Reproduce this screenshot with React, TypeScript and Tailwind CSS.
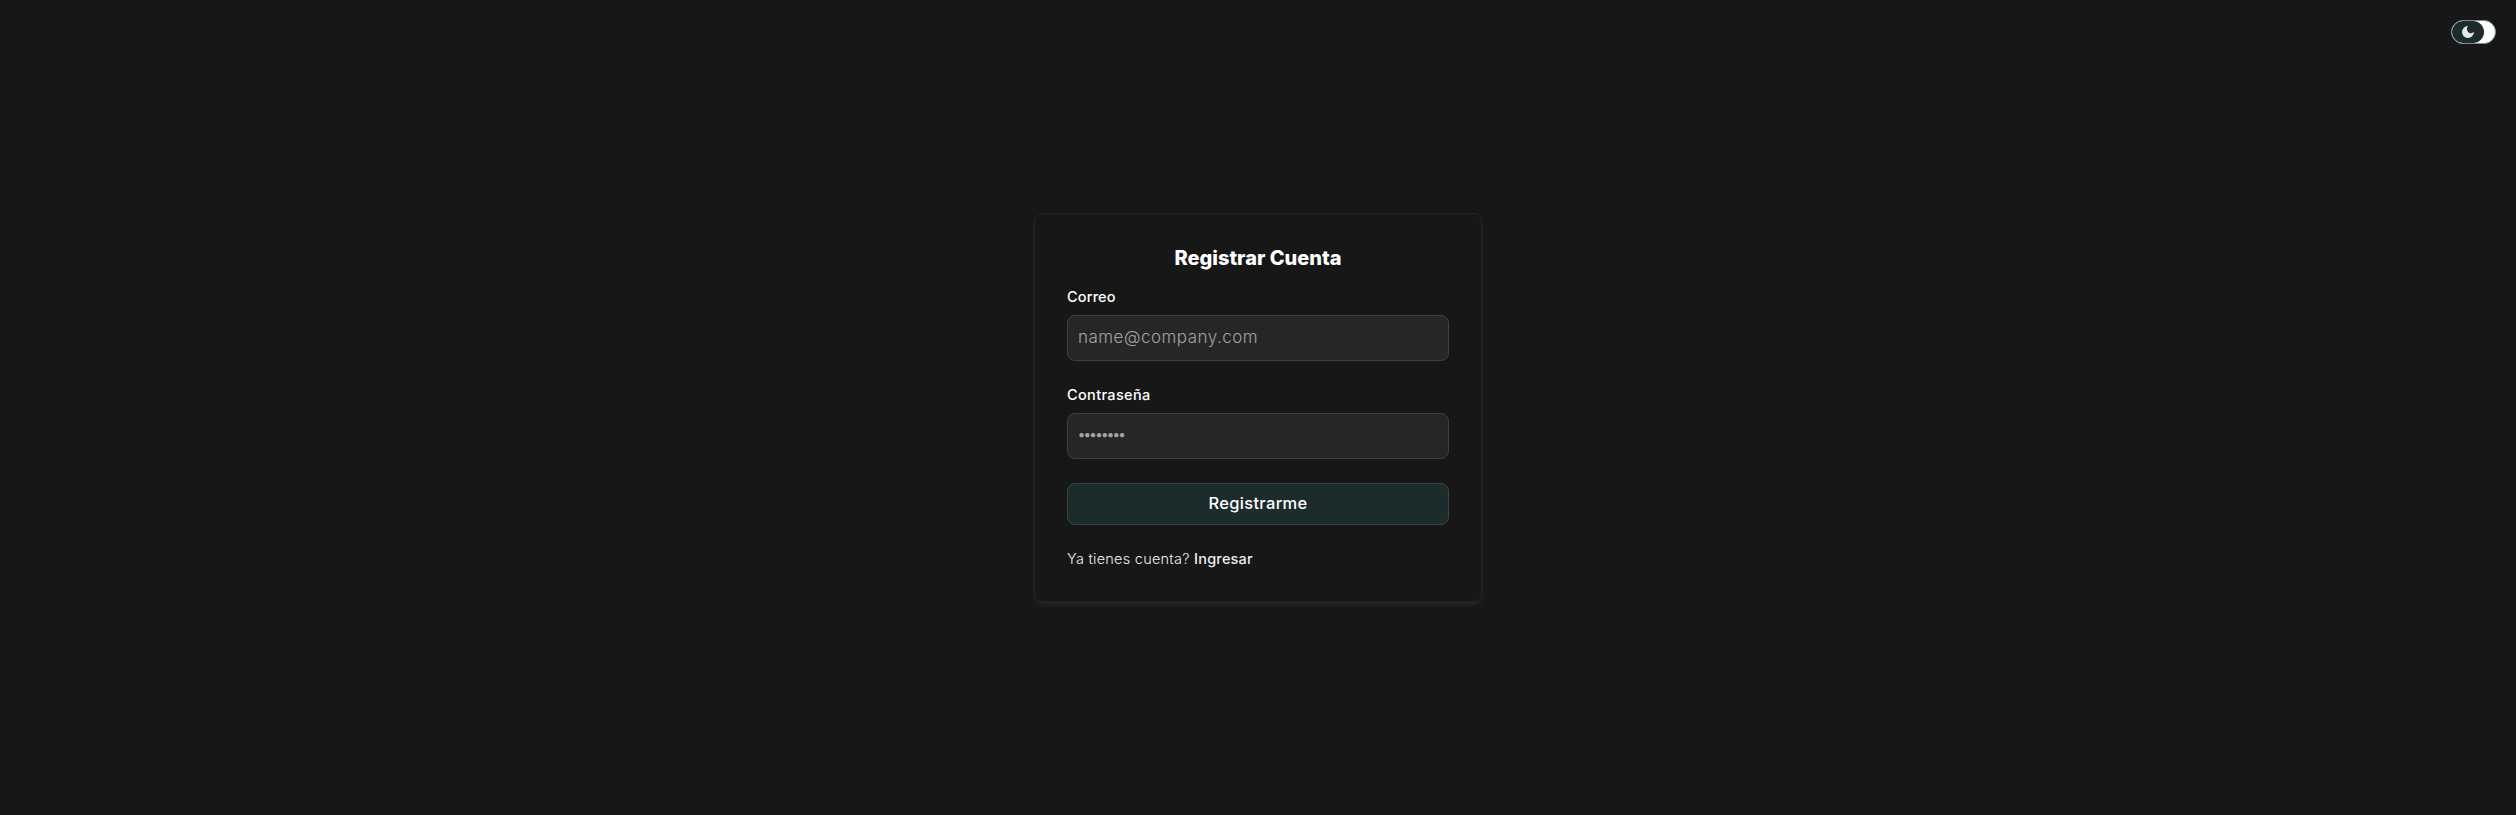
import React from "react";

type FieldProps = { id: string; label: string; type: string; placeholder: string; inputClass: string; labelClass: string };

function Field({ id, label, type, placeholder, inputClass, labelClass }: FieldProps) {
  return (
    <div>
      <label htmlFor={id} className="mb-2 block h-5 text-[14.5px] leading-5 font-medium text-white">
        <span className={labelClass}>{label}</span>
      </label>
      <input
        id={id}
        type={type}
        placeholder={placeholder}
        className={`block h-[46px] w-full rounded-lg border border-[#404040] bg-[#262626] font-light text-white outline-none placeholder:text-[#a3a3a3] ${inputClass}`}
      />
    </div>
  );
}

function ThemeToggle() {
  return (
    <button type="button" aria-label="Tema" className="flex h-6 w-[45px] items-center overflow-hidden rounded-full border border-[#808b8b] bg-white">
      <span className="flex h-full w-8 items-center justify-center rounded-full bg-[#1c2b2b]">
        <svg viewBox="0 0 12 12" className="h-3 w-3" fill="#e5e7eb">
          <path d="M6.2 0A6 6 0 1 0 12 6.1 3.7 3.7 0 0 1 6.2 0Z" />
        </svg>
      </span>
    </button>
  );
}

export default function App() {
  return (
    <div className="flex h-[815px] flex-col bg-[#171717] font-['Inter',sans-serif] text-white">
      <header className="flex h-16 shrink-0 justify-end pt-5 pr-[20px]">
        <ThemeToggle />
      </header>
      <main className="flex grow justify-center pt-[149px]">
        <section className="h-[389px] w-[448px] rounded-lg border border-[#242424] p-8 shadow-[0_4px_6px_-1px_#262626,0_2px_4px_-2px_#262626]">
          <h1 className="mb-4 text-center text-xl leading-tight font-extrabold tracking-[0px]">Registrar Cuenta</h1>
          <form className="space-y-6">
            <Field id="email" label="Correo" type="email" placeholder="name@company.com" inputClass="px-2.5 pb-0.5 text-[17px] tracking-[0.48px]" labelClass="tracking-[0.15px]" />
            <Field id="password" label="Contraseña" type="password" placeholder="••••••••" inputClass="px-[9px] pb-1 text-base tracking-[-3.2px]" labelClass="tracking-[0.35px]" />
            <button type="button" className="h-[42px] w-full rounded-lg border border-[#404040] bg-[#1c2b2b] pb-0.5 text-[16.5px] font-medium tracking-[0.3px]">
              Registrarme
            </button>
            <p className="h-5 text-[14.5px] leading-5 font-light tracking-[0.25px] text-[#eeeeee]">
              Ya tienes cuenta? <a className="font-medium tracking-[0.2px]">Ingresar</a>
            </p>
          </form>
        </section>
      </main>
    </div>
  );
}
